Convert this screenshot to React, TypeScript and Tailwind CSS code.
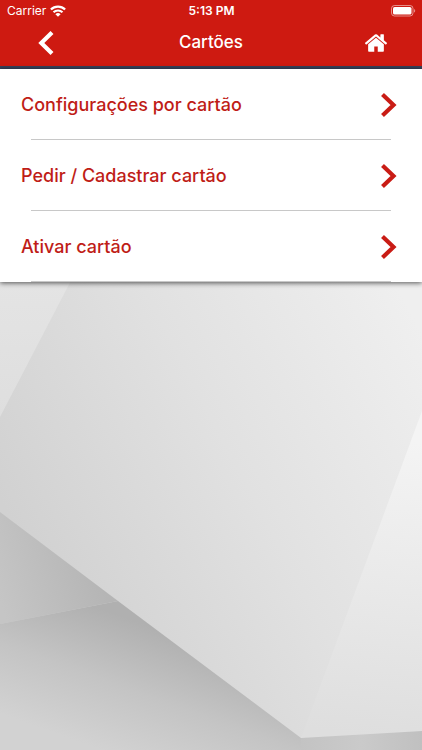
import React from "react";

interface MenuItem {
  id: string;
  label: string;
}

const MENU_ITEMS: MenuItem[] = [
  { id: "settings", label: "Configurações por cartão" },
  { id: "request", label: "Pedir / Cadastrar cartão" },
  { id: "activate", label: "Ativar cartão" },
];

const WifiIcon = () => (
  <svg width="16" height="12" viewBox="0 0 16 12" fill="none" aria-hidden="true">
    <path d="M.9 4.5a10.2 10.2 0 0 1 14.2 0" stroke="currentColor" strokeWidth="2.3" />
    <path d="M3.5 7.3a6.4 6.4 0 0 1 9 0" stroke="currentColor" strokeWidth="2.1" />
    <path d="M8 11.8 5.4 9.2a3.7 3.7 0 0 1 5.2 0z" fill="currentColor" />
  </svg>
);

const BatteryIcon = () => (
  <svg width="25" height="12" viewBox="0 0 25 12" fill="none" aria-hidden="true">
    <rect x="0.5" y="0.5" width="21.5" height="10.5" rx="3" stroke="currentColor" strokeOpacity="0.5" />
    <rect x="2" y="2" width="18.5" height="7.5" rx="1.6" fill="currentColor" />
    <path d="M23.2 4v3.6c1.3-.5 1.3-3.1 0-3.6z" fill="currentColor" fillOpacity="0.6" />
  </svg>
);

const HomeIcon = () => (
  <svg width="22" height="18" viewBox="90 250 1612 1290" fill="currentColor" aria-hidden="true">
    <path d="M1472 992v480q0 26-19 45t-45 19h-384v-384h-256v384h-384q-26 0-45-19t-19-45v-480q0-1 .5-3t.5-3l575-474 575 474q1 2 1 6zm223-69l-62 74q-8 9-21 11h-3q-13 0-21-7l-692-577-692 577q-12 8-24 7-13-2-21-11l-62-74q-8-10-7-23.5t11-21.5l719-599q32-26 76-26t76 26l244 204v-195q0-14 9-23t23-9h192q14 0 23 9t9 23v408l219 182q10 8 11 21.5t-7 23.5z" />
  </svg>
);

const StatusBar = () => (
  <div className="grid h-[22px] grid-cols-3 items-center pl-[7px] pr-[6px]">
    <div className="flex items-center gap-1 text-xs">
      Carrier
      <WifiIcon />
    </div>
    <div className="text-center text-xs font-semibold">5:13 PM</div>
    <div className="flex justify-end">
      <BatteryIcon />
    </div>
  </div>
);

const Header = () => (
  <header className="border-b-[3px] border-[#37415a] bg-[#ce1a11] text-white">
    <StatusBar />
    <div className="flex h-11 items-center justify-between px-[35px] pb-0.5">
      <button type="button" aria-label="Voltar" className="flex h-10 w-[22px] items-center justify-center">
        <svg width="16" height="26" viewBox="0 0 16 26" fill="none" aria-hidden="true">
          <path d="M14 2.5 3.3 13 14 23.5" stroke="currentColor" strokeWidth="4.2" />
        </svg>
      </button>
      <h1 className="text-[17px] font-medium">Cartões</h1>
      <button type="button" aria-label="Início" className="flex h-10 w-[22px] items-center justify-center">
        <HomeIcon />
      </button>
    </div>
  </header>
);

const Backdrop = () => (
  <svg
    className="absolute inset-0 h-full w-full"
    viewBox="0 0 422 750"
    preserveAspectRatio="xMidYMid slice"
    aria-hidden="true"
  >
    <defs>
      <linearGradient id="face" gradientUnits="userSpaceOnUse" x1="0" y1="500" x2="400" y2="290">
        <stop offset="0" stopColor="#d1d1d1" />
        <stop offset="0.5" stopColor="#e1e1e1" />
        <stop offset="1" stopColor="#efefef" />
      </linearGradient>
      <linearGradient id="corner" gradientUnits="userSpaceOnUse" x1="0" y1="282" x2="0" y2="417">
        <stop offset="0" stopColor="#e4e4e4" />
        <stop offset="1" stopColor="#dedede" />
      </linearGradient>
      <linearGradient id="side" gradientUnits="userSpaceOnUse" x1="400" y1="440" x2="360" y2="735">
        <stop offset="0" stopColor="#f4f4f4" />
        <stop offset="1" stopColor="#dedede" />
      </linearGradient>
      <linearGradient id="wall" gradientUnits="userSpaceOnUse" x1="0" y1="600" x2="100" y2="570">
        <stop offset="0" stopColor="#c5c5c5" />
        <stop offset="1" stopColor="#b5b5b5" />
      </linearGradient>
      <linearGradient id="floor" gradientUnits="userSpaceOnUse" x1="160" y1="630" x2="115" y2="755">
        <stop offset="0" stopColor="#b0b0b0" />
        <stop offset="0.5" stopColor="#c4c4c4" />
        <stop offset="1" stopColor="#d2d2d2" />
      </linearGradient>
      <linearGradient id="under" gradientUnits="userSpaceOnUse" x1="301" y1="738" x2="422" y2="738">
        <stop offset="0" stopColor="#c3c3c3" />
        <stop offset="0.5" stopColor="#cacaca" />
        <stop offset="1" stopColor="#c0c0c0" />
      </linearGradient>
    </defs>
    <rect width="422" height="750" fill="url(#face)" />
    <path d="M0 0H217L0 417z" fill="url(#corner)" />
    <path d="M422 411V731L301 738z" fill="url(#side)" />
    <path d="M0 512 118 601 0 624z" fill="url(#wall)" />
    <path d="M0 624 118 601 301 738V750H0z" fill="url(#floor)" />
    <path d="M301 738 422 731V750H301z" fill="url(#under)" />
  </svg>
);

const MenuRow: React.FC<{ item: MenuItem }> = ({ item }) => (
  <li>
    <button
      type="button"
      className="flex h-[70px] w-full items-center justify-between pl-[21px] pr-[25px] pt-0.5 text-left text-lg font-medium text-[#bf1d17]"
    >
      {item.label}
      <svg width="17" height="26" viewBox="0 0 17 26" fill="none" aria-hidden="true">
        <path d="M2.5 2.5 13.5 13l-11 10.5" stroke="#c91c15" strokeWidth="4.2" />
      </svg>
    </button>
    <div className="mx-[31px] h-px bg-[#c8c8c8]" />
  </li>
);

export default function App() {
  return (
    <div className="relative flex min-h-screen flex-col overflow-hidden font-['Inter',sans-serif]">
      <Backdrop />
      <div className="relative">
        <Header />
        <main>
          <ul className="bg-white shadow-[0_1px_5px_rgba(0,0,0,0.65)]">
            {MENU_ITEMS.map((item) => (
              <MenuRow key={item.id} item={item} />
            ))}
          </ul>
        </main>
      </div>
    </div>
  );
}
